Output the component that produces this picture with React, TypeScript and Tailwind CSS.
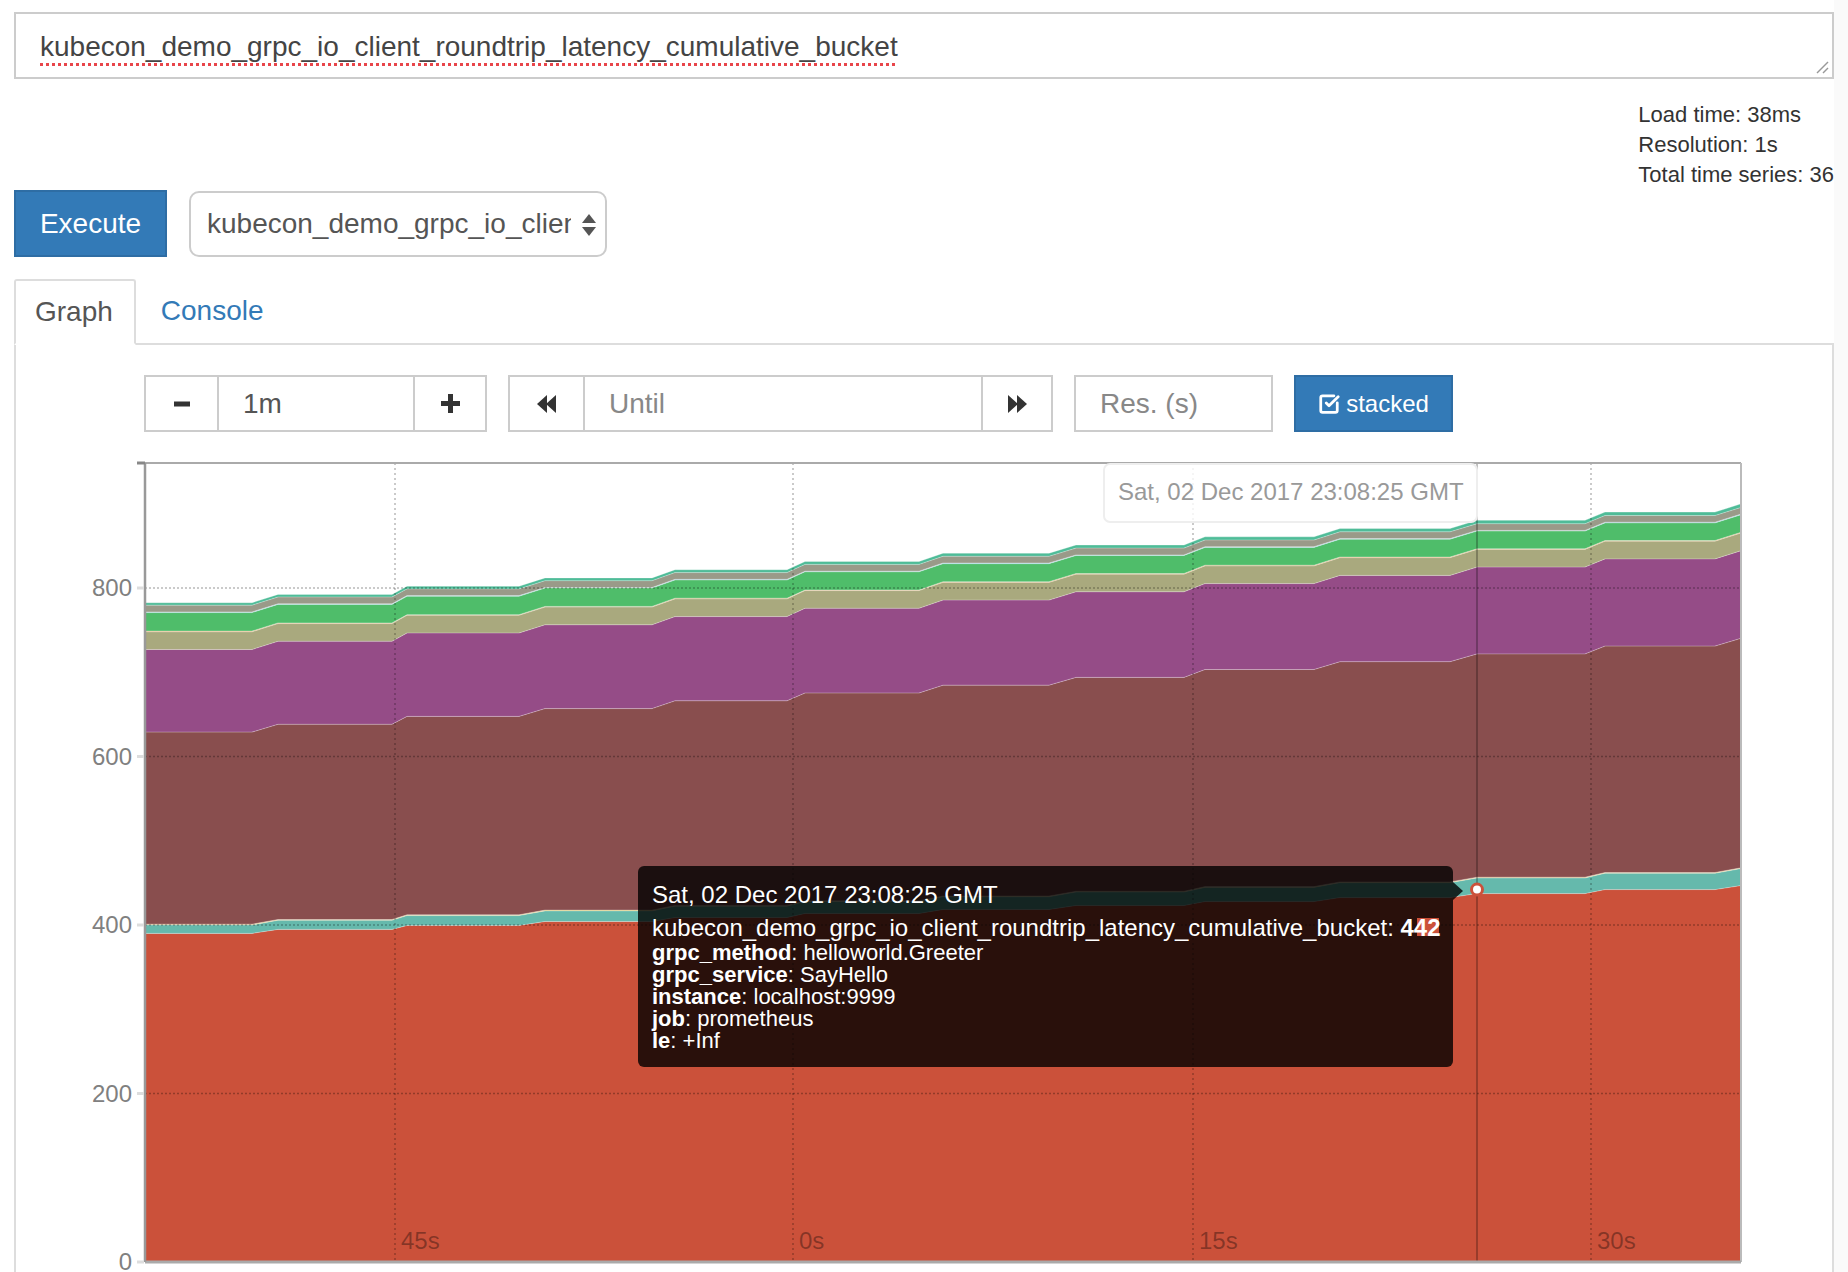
import React from 'react';
import { SquareCheckBig } from 'lucide-react';

// x points of the step-shaped series (local to plot, plot starts at page x 145)
const X = [0, 107, 133, 247, 262, 374, 400, 507, 530, 642, 660, 774, 798, 904, 931, 1039, 1060, 1169, 1195, 1305, 1332, 1440, 1460, 1570, 1596];
const PW = 1596;
const PH = 799;
const K = 0.8425;

const series: { color: string; v: (i: number) => number }[] = [
  { color: '#cb513a', v: (i) => 390 + 4.727 * i },
  { color: '#65b9ac', v: (i) => 10 + 0.85 * i },
  { color: '#d8c77c', v: () => 1 },
  { color: '#894e4e', v: (i) => 228 + 3.7 * i },
  { color: '#954c87', v: (i) => 98 + 0.5 * i },
  { color: '#a9a97e', v: () => 21 },
  { color: '#d9a866', v: () => 0.8 },
  { color: '#4fbd6a', v: (i) => 22 - 0.1 * i },
  { color: '#86c9d8', v: () => 0.8 },
  { color: '#9a9a89', v: () => 8 },
  { color: '#4fbc98', v: (i) => 3 + 0.1 * i },
];

const yOf = (v: number) => PH - v * K;

function buildAreas() {
  let base = X.map(() => 0);
  return series.map((s) => {
    const top = X.map((_, j) => base[j] + s.v(Math.floor(j / 2)));
    const topPts = X.map((x, j) => `${x},${yOf(top[j]).toFixed(1)}`);
    const botPts = X.map((x, j) => `${x},${yOf(base[j]).toFixed(1)}`).reverse();
    base = top;
    return { color: s.color, d: `M${topPts.join('L')}L${botPts.join('L')}Z`, line: topPts.join(' ') };
  });
}

const areas = buildAreas();
const gridX = [250, 648, 1048, 1446];
const xLabels = ['45s', '0s', '15s', '30s'];
const yTicks = [800, 600, 400, 200, 0];

function Chart() {
  return (
    <div className="relative mt-[23px] w-[1816px] h-[817px]">
      <svg width={1816} height={817} fontFamily="Liberation Sans, Arial, sans-serif">
        <g transform="translate(129,8)">
          {areas.map((a, i) => (
            <path key={i} d={a.d} fill={a.color} />
          ))}
          {areas.map((a, i) => (
            <polyline key={'l' + i} points={a.line} fill="none" stroke="rgba(255,255,255,0.3)" strokeWidth={1} />
          ))}
          {yTicks.slice(0, 4).map((v) => (
            <line key={v} x1={0} x2={PW} y1={yOf(v)} y2={yOf(v)} stroke="rgba(0,0,0,0.28)" strokeWidth={1.5} strokeDasharray="2 2" />
          ))}
          {gridX.map((x) => (
            <line key={x} x1={x} x2={x} y1={0} y2={PH} stroke="rgba(0,0,0,0.28)" strokeWidth={1.5} strokeDasharray="2 3" />
          ))}
          {gridX.map((x, i) => (
            <text key={'t' + x} x={x + 6} y={778} dy="0.35em" fontSize={24} fill="rgba(0,0,0,0.35)">
              {xLabels[i]}
            </text>
          ))}
          {/* hover line */}
          <line x1={1332} x2={1332} y1={0} y2={PH} stroke="rgba(0,0,0,0.25)" strokeWidth={2} />
          {/* frame */}
          <line x1={0} x2={PW} y1={0} y2={0} stroke="#aaa" strokeWidth={2} />
          <line x1={PW} x2={PW} y1={0} y2={PH} stroke="#bbb" strokeWidth={2} />
          <line x1={0} x2={PW} y1={PH} y2={PH} stroke="#aaa" strokeWidth={3} />
          <line x1={0} x2={0} y1={0} y2={PH} stroke="#999" strokeWidth={2.5} />
          <line x1={-8} x2={0} y1={0} y2={0} stroke="#888" strokeWidth={3} />
          {yTicks.map((v) => (
            <g key={'y' + v}>
              <line x1={-8} x2={-1} y1={yOf(v)} y2={yOf(v)} stroke="#ddd" strokeWidth={3} />
              <text x={-13} y={yOf(v)} dy="0.35em" fontSize={24} fill="#808080" textAnchor="end">
                {v}
              </text>
            </g>
          ))}
          {/* hover x label */}
          <rect x={959} y={1} width={373} height={58} rx={6} fill="rgba(255,255,255,0.8)" stroke="#eee" strokeWidth={2} />
          <text x={973} y={29} dy="0.35em" fontSize={24} fill="#999">
            Sat, 02 Dec 2017 23:08:25 GMT
          </text>
          {/* hover point */}
          <circle cx={1332} cy={yOf(442)} r={5.5} fill="#fff" stroke="#cb513a" strokeWidth={3} />
        </g>
      </svg>

      <div className="absolute left-[622px] top-[411px] w-[815px] h-[201px] rounded-[6px] bg-[rgba(0,0,0,0.8)] pl-[14px] pt-[14px] text-white">
        <div className="text-[24px] leading-[30px] mb-[4px]">Sat, 02 Dec 2017 23:08:25 GMT</div>
        <div className="relative text-[24px] leading-[28px] whitespace-nowrap">
          <span className="absolute left-[765px] top-[4px] w-[22px] h-[18px] bg-[#cb513a]" />
          <span className="relative">
            kubecon_demo_grpc_io_client_roundtrip_latency_cumulative_bucket: <b>442</b>
          </span>
        </div>
        <div className="text-[22px] leading-[22px]">
          <div><b>grpc_method</b>: helloworld.Greeter</div>
          <div><b>grpc_service</b>: SayHello</div>
          <div><b>instance</b>: localhost:9999</div>
          <div><b>job</b>: prometheus</div>
          <div><b>le</b>: +Inf</div>
        </div>
        <div className="absolute right-[-10px] top-[16px] w-0 h-0 border-y-[9px] border-y-transparent border-l-[10px] border-l-[rgba(0,0,0,0.8)]" />
      </div>
    </div>
  );
}

function Backward({ flip }: { flip?: boolean }) {
  return (
    <svg width={20} height={20} viewBox="0 0 20 20" style={flip ? { transform: 'scaleX(-1)' } : undefined}>
      <polygon points="0,10 10,1 10,19" fill="#333" />
      <polygon points="9,10 19,1 19,19" fill="#333" />
    </svg>
  );
}

export default function App() {
  return (
    <div className="w-[1848px] h-[1272px] overflow-hidden bg-white font-['Liberation_Sans',Arial,sans-serif] text-[#333]">
      <div className="flex">
        <div className="w-[1834px] pl-[14px] pt-[12px]">
          {/* query textarea */}
          <div className="relative h-[67px] border-2 border-[#ccc] pl-[24px] pt-[13px] text-[28px] leading-[40px] text-[#444]">
            <span className="underline decoration-dotted decoration-[#e8454a] decoration-[3px] underline-offset-[7px]">
              kubecon_demo_grpc_io_client_roundtrip_latency_cumulative_bucket
            </span>
            <svg className="absolute right-[3px] bottom-[3px]" width={14} height={14} viewBox="0 0 14 14">
              <line x1={2} y1={13} x2={13} y2={2} stroke="#999" strokeWidth={1.5} />
              <line x1={8} y1={13} x2={13} y2={8} stroke="#999" strokeWidth={1.5} />
            </svg>
          </div>

          {/* stats */}
          <div className="flex justify-end mt-[21px]">
            <div className="text-[22px] leading-[30px] text-[#333]">
              <div>Load time: 38ms</div>
              <div>Resolution: 1s</div>
              <div>Total time series: 36</div>
            </div>
          </div>

          {/* execute row */}
          <div className="flex items-center gap-[22px]">
            <button className="w-[153px] h-[67px] bg-[#337ab7] border-2 border-[#2e6da4] text-white text-[28px]">Execute</button>
            <div className="relative w-[418px] h-[66px] border-2 border-[#ccc] rounded-[10px] flex items-center pl-[16px] pr-[34px] text-[28px] text-[#555] overflow-hidden">
              <span className="whitespace-nowrap overflow-hidden">kubecon_demo_grpc_io_client_roundtrip_latency_cumulative_bucket</span>
              <svg className="absolute right-[9px] top-[21px]" width={14} height={22} viewBox="0 0 14 22">
                <polygon points="7,0 14,9 0,9" fill="#555" />
                <polygon points="0,13 14,13 7,22" fill="#555" />
              </svg>
            </div>
          </div>

          {/* tabs */}
          <div className="flex mt-[22px] border-b-2 border-[#ddd] h-[66px]">
            <div className="h-[66px] -mb-[2px] border-2 border-[#ddd] border-b-white bg-white rounded-t-[3px] pl-[19px] pr-[21px] flex items-center text-[28px] text-[#555]">
              Graph
            </div>
            <div className="ml-[2px] h-[64px] pl-[23px] pr-[21px] flex items-center text-[28px] text-[#337ab7]">Console</div>
          </div>

          {/* panel */}
          <div className="border-x-2 border-[#ddd] h-[930px] pt-[30px]">
            <div className="flex items-center gap-[21px] pl-[128px] h-[57px]">
              <div className="flex w-[343px] h-[57px] border-2 border-[#ccc]">
                <div className="w-[71px] flex items-center justify-center">
                  <svg width={16} height={6}><rect width={16} height={5} y={0.5} fill="#333" /></svg>
                </div>
                <div className="w-[198px] border-x-2 border-[#ccc] flex items-center pl-[24px] text-[28px] text-[#555]">1m</div>
                <div className="flex-1 flex items-center justify-center">
                  <svg width={19} height={19} viewBox="0 0 19 19">
                    <rect x={7} y={0} width={5} height={19} fill="#333" />
                    <rect x={0} y={7} width={19} height={5} fill="#333" />
                  </svg>
                </div>
              </div>
              <div className="flex w-[545px] h-[57px] border-2 border-[#ccc]">
                <div className="w-[73px] flex items-center justify-center">
                  <Backward />
                </div>
                <div className="w-[400px] border-x-2 border-[#ccc] flex items-center pl-[24px] text-[28px] text-[#888]">Until</div>
                <div className="flex-1 flex items-center justify-center">
                  <Backward flip />
                </div>
              </div>
              <div className="w-[199px] h-[57px] border-2 border-[#ccc] flex items-center pl-[24px] text-[28px] text-[#888]">Res. (s)</div>
              <button className="w-[159px] h-[57px] bg-[#337ab7] border-2 border-[#2e6da4] flex items-center justify-center gap-[6px] text-white text-[24px]">
                <SquareCheckBig size={22} strokeWidth={3} />
                stacked
              </button>
            </div>
            <Chart />
          </div>
        </div>
        <div className="flex-1 bg-[#fafafa]" />
      </div>
    </div>
  );
}
